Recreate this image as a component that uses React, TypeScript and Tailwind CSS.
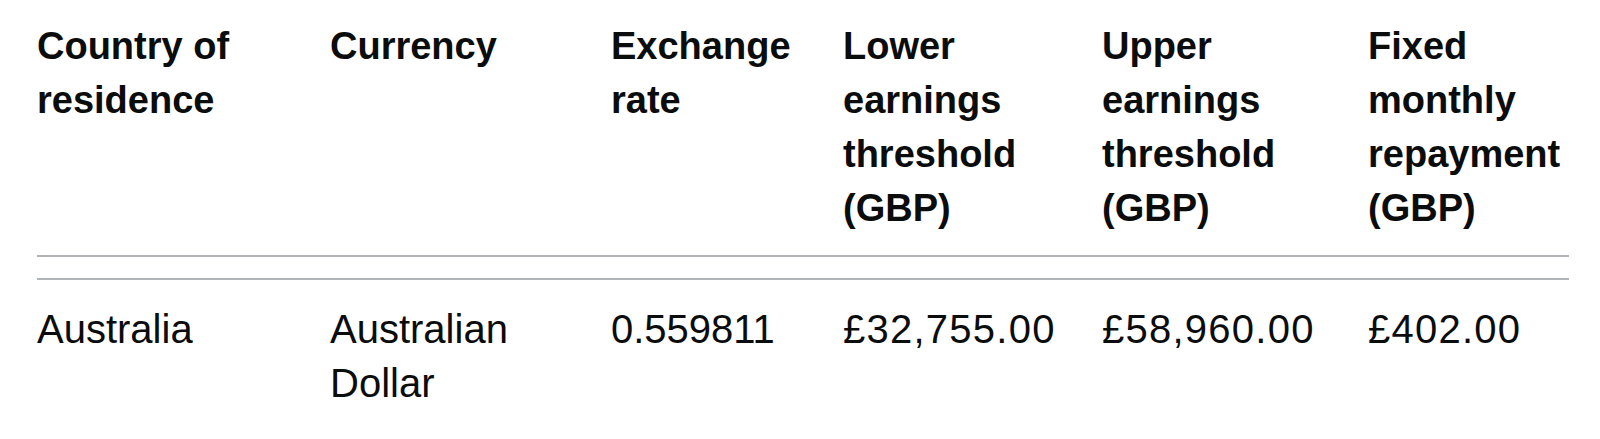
import React from "react";

const headers = [
  "Country of residence",
  "Currency",
  "Exchange rate",
  "Lower earnings threshold (GBP)",
  "Upper earnings threshold (GBP)",
  "Fixed monthly repayment (GBP)",
];

const rows = [
  ["Australia", "Australian Dollar", "0.559811", "£32,755.00", "£58,960.00", "£402.00"],
];

const colWidths = ["w-[293px]", "w-[281px]", "w-[232px]", "w-[259px]", "w-[266px]", "w-[201px]"];

export default function App() {
  return (
    <div className="bg-white min-h-screen pl-[37px] text-[#0b0c0c] font-['Liberation_Sans',Arial,sans-serif]">
      <table className="table-fixed border-separate border-spacing-0 w-[1532px] text-left">
        <colgroup>
          {colWidths.map((w, i) => (
            <col key={i} className={w} />
          ))}
        </colgroup>
        <thead>
          <tr>
            {headers.map((h, i) => (
              <th
                key={h}
                className={`align-top font-bold text-[38px] leading-[54px] pt-[19px] pb-[20px] border-b-2 border-[#b1b4b6] ${
                  i === headers.length - 1 ? "pr-0" : "pr-[43px]"
                }`}
              >
                {h}
              </th>
            ))}
          </tr>
        </thead>
        <tbody>
          <tr>
            <td colSpan={6} className="h-[23px] p-0 border-b-2 border-[#b1b4b6]" />
          </tr>
          {rows.map((row, r) => (
            <tr key={r}>
              {row.map((cell, i) => (
                <td
                  key={i}
                  className={`align-top font-normal text-[40px] leading-[54px] pt-[22px] pb-[22px] ${
                    i >= 3 ? "tracking-[1.25px]" : ""
                  } ${i === row.length - 1 ? "pr-0" : "pr-[43px]"}`}
                >
                  {cell}
                </td>
              ))}
            </tr>
          ))}
        </tbody>
      </table>
    </div>
  );
}
